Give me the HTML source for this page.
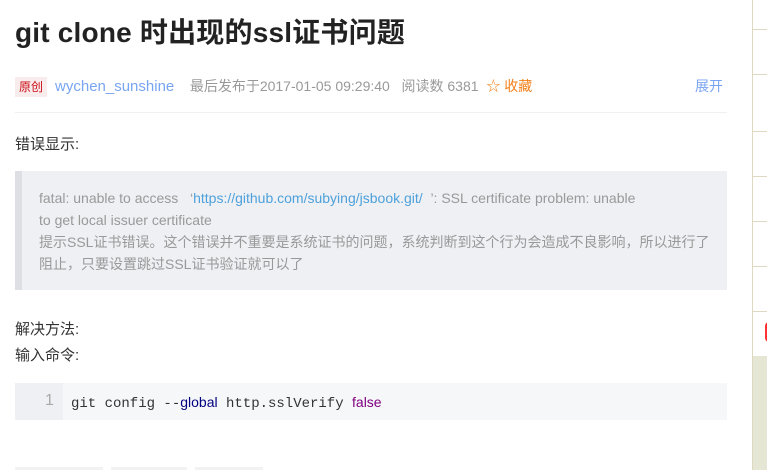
<!DOCTYPE html>
<html><head><meta charset="utf-8"><style>
body{margin:0;width:767px;height:470px;overflow:hidden;background:#fff;font-family:"Liberation Sans","Noto Sans CJK SC",sans-serif;position:relative}
.a{position:absolute;white-space:nowrap}
h1{position:absolute;left:15px;top:11px;margin:0;font-size:28px;font-weight:bold;color:#222;letter-spacing:0.2px}
.meta{top:76px;left:15px;font-size:14px;color:#999;line-height:20px}
.tag{display:inline-block;background:#f9ecec;color:#ca0c16;font-size:12px;padding:0 4px;line-height:20px;margin-right:8px}
.p{font-size:15px;color:#333}
.bq{position:absolute;left:15px;top:171px;width:705px;height:119px;background:#eef0f4;border-left:7px solid #dddfe4}
.bq div{position:absolute;left:17px;top:16px;font-size:14px;line-height:22px;color:#999;white-space:nowrap}
.sb{position:absolute;left:752px;top:0;width:15px;height:470px;border-left:1px solid #ddd9c0;background:#fff}
.sb i{position:absolute;left:0;width:15px;height:1px;background:#ddd9c0}
</style></head><body>
<h1>git clone 时出现的ssl证书问题</h1>
<div class="a meta"><span class="tag">原创</span><span style="color:#78a5f1;font-size:15px">wychen_sunshine</span>&nbsp;&nbsp;&nbsp;&nbsp;最后发布于2017-01-05 09:29:40 &nbsp;&nbsp;阅读数 6381&nbsp;&nbsp;<span style="color:#f4801a">☆ 收藏</span></div>
<div class="a" style="left:695px;top:76px;font-size:14px;color:#78a5f1;line-height:20px">展开</div>
<div class="a" style="left:15px;top:112px;width:712px;height:1px;background:#f0f0f2"></div>
<div class="a p" style="left:15px;top:133px">错误显示:</div>
<div class="bq"><div>fatal: unable to access &nbsp;&nbsp;‘<span style="color:#4ea1db">https://github.com/subying/jsbook.git/</span> &nbsp;’: SSL certificate problem: unable<br>to get local issuer certificate<br>提示SSL证书错误。这个错误并不重要是系统证书的问题，系统判断到这个行为会造成不良影响，所以进行了<br>阻止，只要设置跳过SSL证书验证就可以了</div></div>
<div class="a p" style="left:15px;top:318px">解决方法:</div>
<div class="a p" style="left:15px;top:344px">输入命令:</div>
<div class="a" style="left:15px;top:383px;width:712px;height:37px;background:#f6f7f9"></div>
<div class="a" style="left:15px;top:383px;width:48px;height:37px;background:#eef0f4"></div>
<div class="a" style="left:45px;top:392px;font-size:16px;color:#aaa">1</div>
<div class="a" style="left:71px;top:394px;font-size:14px;font-family:'Liberation Mono',monospace;color:#333">git config --<span style="color:#000080;font-family:'Liberation Sans',sans-serif">global</span> http.sslVerify <span style="color:#800080;font-family:'Liberation Sans',sans-serif">false</span></div>
<div class="a" style="left:15px;top:467px;width:88px;height:3px;background:#f2f2f2"></div>
<div class="a" style="left:111px;top:467px;width:76px;height:3px;background:#f2f2f2"></div>
<div class="a" style="left:195px;top:467px;width:68px;height:3px;background:#f2f2f2"></div>
<div class="sb"><i style="top:29px"></i><i style="top:74px"></i><i style="top:131px"></i><i style="top:176px"></i><i style="top:221px"></i><i style="top:266px"></i><i style="top:311px"></i>
<div style="position:absolute;left:12px;top:322px;width:8px;height:20px;border-radius:10px;background:#f33"></div>
<div style="position:absolute;left:0;top:356px;width:15px;height:114px;background:#e6e6d4"></div></div>
</body></html>
